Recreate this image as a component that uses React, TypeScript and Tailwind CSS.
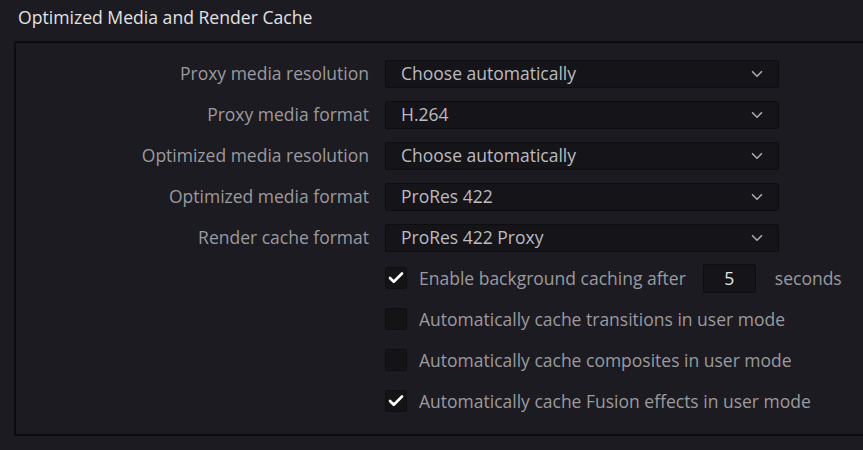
import { ChevronDown, Check } from "lucide-react";

const selects = [
  { label: "Proxy media resolution", value: "Choose automatically" },
  { label: "Proxy media format", value: "H.264" },
  { label: "Optimized media resolution", value: "Choose automatically" },
  { label: "Optimized media format", value: "ProRes 422" },
  { label: "Render cache format", value: "ProRes 422 Proxy" },
];

const checks = [
  { text: "Automatically cache transitions in user mode", on: false },
  { text: "Automatically cache composites in user mode", on: false },
  { text: "Automatically cache Fusion effects in user mode", on: true },
];

const Box = ({ on }: { on: boolean }) => (
  <div className="w-[22px] h-[22px] rounded-[3px] bg-[#141417] border border-[#0f0f11] flex items-center justify-center">
    {on && <Check className="w-[18px] h-[18px] text-white" strokeWidth={3.5} />}
  </div>
);

const App = () => {
  return (
    <div
      className="w-[863px] h-[450px] bg-[#1c1b21] overflow-hidden text-[17.5px]"
      style={{ fontFamily: '"Open Sans", "Noto Sans", sans-serif' }}
    >
      {/* Header */}
      <div className="h-[41px] pl-[18px] pt-[4px] text-[#e2e2e4] text-[17.6px]">
        Optimized Media and Render Cache
      </div>

      {/* Panel */}
      <div className="ml-[14px] w-[900px] h-[395px] border-t-2 border-l-2 border-b-2 border-[#0d0d0f] bg-[#1c1b21] rounded-tl-[3px] pt-[17px]">
        <div className="flex flex-col gap-[14px]">
          {selects.map((s) => (
            <div key={s.label} className="flex items-center h-[27px]">
              <div className="w-[353px] text-right text-[#9b9a9f]">{s.label}</div>
              <div className="ml-[16px] w-[394px] h-[28px] bg-[#151418] border border-[#0e0e10] rounded-[2px] flex items-center justify-between pl-[15px] pr-[12px] text-[#bcbbc0]">
                <span>{s.value}</span>
                <ChevronDown className="w-[18px] h-[18px] text-[#a9a8ad]" strokeWidth={2.2} />
              </div>
            </div>
          ))}
        </div>

        <div className="ml-[369px] mt-[13px] flex flex-col gap-[13px]">
          <div className="flex items-center h-[28px]">
            <Box on />
            <span className="ml-[12px] text-[#9b9a9f]">Enable background caching after</span>
            <div className="ml-[17px] w-[53px] h-[29px] bg-[#151418] border border-[#0e0e10] rounded-[2px] flex items-center justify-center text-[#e4e4e6]">
              5
            </div>
            <span className="ml-[19px] text-[#9b9a9f]">seconds</span>
          </div>
          {checks.map((c) => (
            <div key={c.text} className="flex items-center h-[28px]">
              <Box on={c.on} />
              <span className="ml-[12px] text-[#9b9a9f]">{c.text}</span>
            </div>
          ))}
        </div>
      </div>
    </div>
  );
};

export default App;
